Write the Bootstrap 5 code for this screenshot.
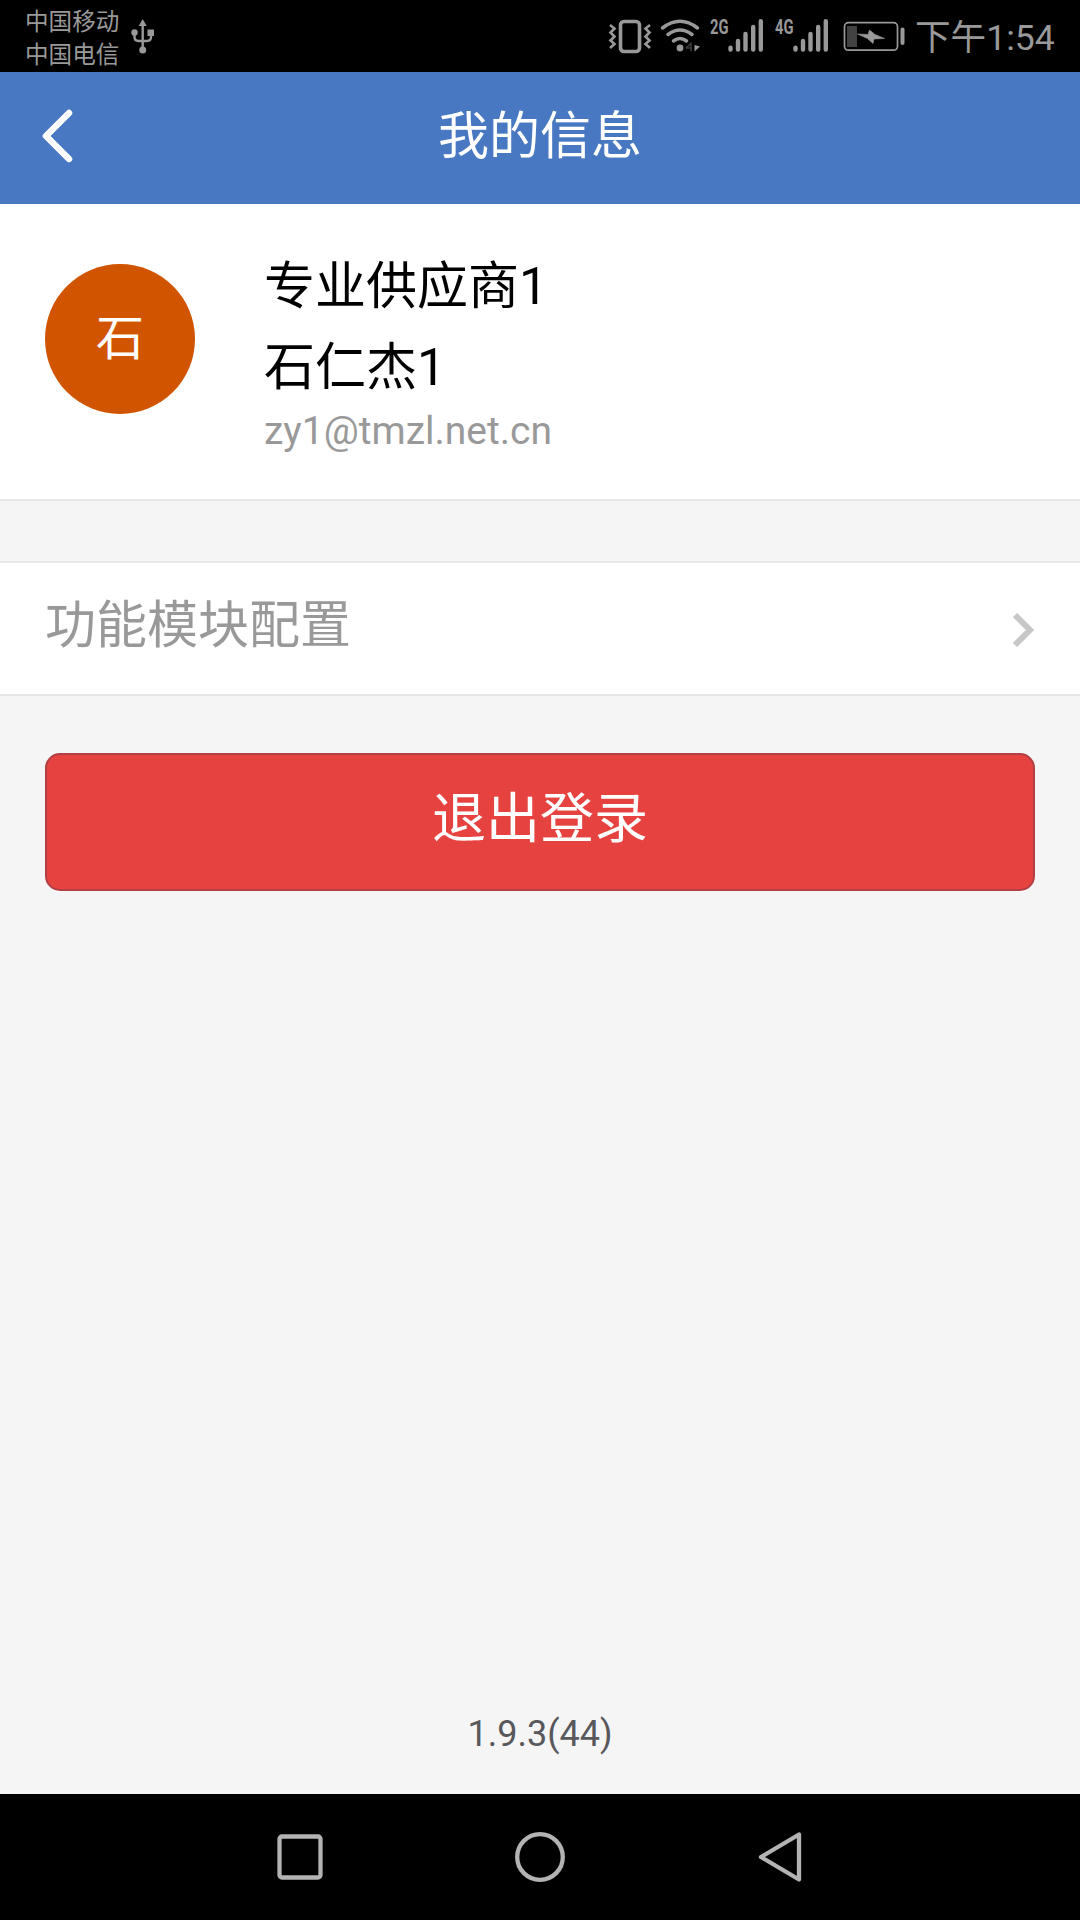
<!DOCTYPE html>
<html lang="zh-CN">
<head>
<meta charset="utf-8">
<meta name="viewport" content="width=device-width, initial-scale=1">
<title>我的信息</title>
<link href="https://cdn.jsdelivr.net/npm/bootstrap@5.3.0/dist/css/bootstrap.min.css" rel="stylesheet">
<style>
  body { font-family: Roboto, "Noto Sans CJK SC", sans-serif; background: #f5f5f5; }
  svg { display: block; flex: none; }
  .screen { height: 1920px; width: 1080px; }
  .statusbar { height: 72px; background: #000; color: #999; padding-left: 25px; }
  .carrier { font-size: 23.6px; line-height: 32.5px; padding-top: 6px; width: 106px; }
  .clock { font-size: 35.6px; line-height: 40px; padding-top: 18px; margin-left: 7px; width: 165px; white-space: nowrap; }
  .topbar { height: 132px; background: #4878c1; color: #fff; padding: 0 42px; }
  .title-text { font-size: 51px; line-height: 60px; padding-top: 35px; }
  .profile { height: 297px; padding: 42px 45px 0; gap: 69px; border-bottom: 2px solid #e6e6e6; }
  .avatar { width: 150px; height: 150px; margin-top: 18px; background: #d15400; color: #fff; font-size: 48px; line-height: 150px; }
  .name-line { font-size: 51px; line-height: 81px; color: #000; }
  .mail-line { font-size: 39px; line-height: 46px; color: #999; }
  .config-row { height: 135px; margin-top: 60px; padding: 0 45px; border-top: 2px solid #e6e6e6; border-bottom: 2px solid #e6e6e6; color: #999; }
  .config-label { font-size: 51px; line-height: 60px; padding-top: 33px; }
  .logout { margin: 57px 45px 0; height: 138px; border-radius: 15px; border: 2px solid #b04045; background: #e64340; color: #fff; font-size: 54px; line-height: 60px; padding: 0 0 5px; }
  .logout:hover { background: #d63c39; color: #fff; }
  .version { font-size: 36px; line-height: 42px; color: #58585c; padding-bottom: 39px; }
  .softkeys { height: 126px; background: #000; gap: 191px; }
</style>
</head>
<body>
<div class="screen d-flex flex-column overflow-hidden">
  <header class="statusbar d-flex flex-shrink-0">
    <div class="carrier"><div>中国移动</div><div>中国电信</div></div>
    <svg width="24" height="72" viewBox="131 0 24 72" fill="none" stroke="#999" stroke-width="2.4">
      <path d="M142.700 25V50M134.500 33v4q0 4 4 4h8.500q4 0 4-4v-4"/>
      <g fill="#999" stroke="none"><path d="M142.700 19l4 7h-8z"/><circle cx="142.700" cy="50" r="3.500"/><circle cx="134.500" cy="32.500" r="3.200"/><rect x="147.500" y="29.500" width="6.500" height="6.500"/></g>
    </svg>
    <svg class="ms-auto" width="300" height="72" viewBox="608 0 300 72" fill="none" stroke="#999">
      <rect x="620.500" y="21.500" width="19" height="30" rx="3.500" stroke-width="3.600"/>
      <path d="M610 25l4.500 3.500-4 4 4 4-4 4 4 3.500-4.500 4M650 25l-4.500 3.500 4 4-4 4 4 4-4 3.500 4.500 4" stroke-width="2.600"/>
      <g stroke-width="3.500" stroke-linecap="round"><path d="M662.500 28q17.500-13.500 35 0M668 34.500q12-9 24 0M673.500 41q6.500-5 13 0"/></g>
      <circle cx="680" cy="48" r="3.400" fill="#999" stroke="none"/>
      <path d="M686 48l5-4.500v8M686 48h6" stroke="#3a3a3a" stroke-width="1.500"/>
      <path d="M694.500 45v6.500l5.500-5z" fill="#999" stroke="none"/>
      <g fill="#999" stroke="none" font-family="Roboto, sans-serif" font-weight="700" font-size="19.500">
        <text x="710" y="33.500" textLength="18.500" lengthAdjust="spacingAndGlyphs">2G</text>
        <text x="775" y="33.500" textLength="18.500" lengthAdjust="spacingAndGlyphs">4G</text>
      </g>
      <g stroke-width="4.400" stroke-linecap="round">
        <path d="M730.500 47.800v1.700M738 41v8.500M745.500 34v15.500M753.200 27v22.500M760.800 21.200v28.300"/>
        <path d="M795.500 47.800v1.700M803 41v8.500M810.500 34v15.500M818.200 27v22.500M825.800 21.200v28.300"/>
      </g>
      <rect x="844.500" y="22.700" width="53" height="27.500" rx="4" stroke-width="1.700"/>
      <path d="M847 26h10v21h-10z" fill="#424242" stroke="none"/>
      <path d="M857.500 34l10.500.5 1.500-4.500 5.500 4.500 9.500 4-10.500.5-1 4.500-5.500-5z" fill="#999" stroke="#999" stroke-width=".6"/>
      <rect x="900.500" y="27.500" width="4" height="17.500" rx="2" fill="#999" stroke="none"/>
    </svg>
    <div class="clock">下午1:54</div>
  </header>

  <nav class="topbar d-flex flex-shrink-0">
    <svg width="32" height="132" viewBox="42 72 32 132" fill="none" stroke="#fff" stroke-width="6.500" stroke-linecap="round" stroke-linejoin="round"><path d="M69 113L46 136l23 23"/></svg>
    <div class="title-text flex-grow-1 text-center">我的信息</div>
    <svg width="32" height="132" aria-hidden="true"></svg>
  </nav>

  <section class="profile bg-white d-flex flex-shrink-0">
    <div class="avatar rounded-circle text-center">石</div>
    <div>
      <div class="name-line">专业供应商1</div>
      <div class="name-line">石仁杰1</div>
      <div class="mail-line">zy1@tmzl.net.cn</div>
    </div>
  </section>

  <section class="config-row bg-white d-flex justify-content-between flex-shrink-0">
    <div class="config-label">功能模块配置</div>
    <svg width="24" height="131" viewBox="1011 563 24 131" fill="none" stroke="#c7c7c7" stroke-width="6"><path d="M1015 615l15 15-15 15"/></svg>
  </section>

  <button type="button" class="logout btn flex-shrink-0">退出登录</button>

  <div class="version mt-auto text-center">1.9.3(44)</div>

  <footer class="softkeys d-flex justify-content-center align-items-center flex-shrink-0">
    <svg width="50" height="52" viewBox="0 0 50 52" fill="none" stroke="#b3b3b3" stroke-width="4.300"><rect x="5.500" y="5.500" width="41" height="41" rx="2.500"/></svg>
    <svg width="50" height="52" viewBox="0 0 50 52" fill="none" stroke="#b3b3b3" stroke-width="4.300"><circle cx="25" cy="26" r="22.800"/></svg>
    <svg width="50" height="52" viewBox="0 0 50 52" fill="none" stroke="#b3b3b3" stroke-width="4.300" stroke-linejoin="round"><path d="M43 3.500v45L5 26z"/></svg>
  </footer>
</div>
<script src="https://cdn.jsdelivr.net/npm/bootstrap@5.3.0/dist/js/bootstrap.bundle.min.js"></script>
</body>
</html>
